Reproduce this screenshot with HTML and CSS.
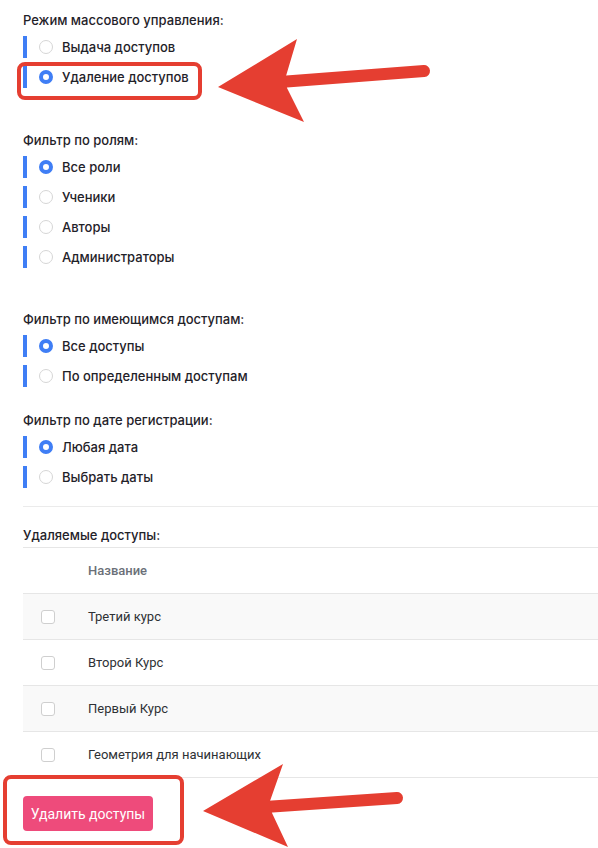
FILE: index.html
```html
<!DOCTYPE html>
<html lang="ru">
<head>
  <meta charset="UTF-8">
  <title>Массовое управление доступами</title>
  <link rel="stylesheet" href="styles.css">
</head>
<body>
  <div class="page">
    <!-- Режим -->
    <div class="group spaced">
      <div class="group-title">Режим массового управления:</div>
      <label class="option"><input type="radio" name="mode"> Выдача доступов</label>
      <label class="option"><input type="radio" name="mode" checked> Удаление доступов</label>
    </div>

    <!-- Роли -->
    <div class="group spaced roles">
      <div class="group-title">Фильтр по ролям:</div>
      <label class="option"><input type="radio" name="role" checked> Все роли</label>
      <label class="option"><input type="radio" name="role"> Ученики</label>
      <label class="option"><input type="radio" name="role"> Авторы</label>
      <label class="option"><input type="radio" name="role"> Администраторы</label>
    </div>

    <!-- Доступы -->
    <div class="group">
      <div class="group-title">Фильтр по имеющимся доступам:</div>
      <label class="option"><input type="radio" name="access" checked> Все доступы</label>
      <label class="option"><input type="radio" name="access"> По определенным доступам</label>
    </div>

    <!-- Дата -->
    <div class="group last">
      <div class="group-title">Фильтр по дате регистрации:</div>
      <label class="option"><input type="radio" name="date" checked> Любая дата</label>
      <label class="option"><input type="radio" name="date"> Выбрать даты</label>
    </div>

    <hr class="divider">

    <div class="group-title">Удаляемые доступы:</div>
    <table class="access-table">
      <thead>
        <tr>
          <th class="col-check"></th>
          <th>Название</th>
        </tr>
      </thead>
      <tbody>
        <tr><td class="col-check"><input type="checkbox"></td><td>Третий курс</td></tr>
        <tr><td class="col-check"><input type="checkbox"></td><td>Второй Курс</td></tr>
        <tr><td class="col-check"><input type="checkbox"></td><td>Первый Курс</td></tr>
        <tr><td class="col-check"><input type="checkbox"></td><td>Геометрия для начинающих</td></tr>
      </tbody>
    </table>

    <button class="btn-delete">Удалить доступы</button>
  </div>

  <!-- Annotation overlay -->
  <svg class="annotations" width="598" height="848" viewBox="0 0 598 848">
    <rect x="19" y="64" width="181" height="34" rx="6" fill="none" stroke="#e53e31" stroke-width="4"/>
    <line x1="280" y1="82" x2="424" y2="71" stroke="#e53e31" stroke-width="12" stroke-linecap="round"/>
    <polygon points="218,87 297,39 286,76 287,88 304,122" fill="#e53e31"/>

    <rect x="5" y="777" width="177" height="66" rx="6" fill="none" stroke="#e53e31" stroke-width="4"/>
    <line x1="265" y1="807" x2="397" y2="798" stroke="#e53e31" stroke-width="12" stroke-linecap="round"/>
    <polygon points="203,811 283,764 270,801 272,813 288,847" fill="#e53e31"/>
  </svg>
</body>
</html>
```

FILE: styles.css
```css
body {
  margin: 0;
  background: #fff;
  color: #1f2229;
  font-family: Inter, "Noto Sans", sans-serif;
  position: relative;
}
.page {
  padding: 12px 0 20px 23px;
}
/* Radio groups */
.group {
  display: flex;
  flex-direction: column;
  gap: 8px;
  margin-bottom: 25px;
}
.group.spaced {
  margin-bottom: 44px;
}
.group.roles {
  margin-bottom: 43px;
}
.group.last {
  margin-bottom: 18px;
}
.group-title {
  font-size: 13px;
  font-weight: 500;
  line-height: 16px;
  color: #1f2229;
}
.option {
  display: flex;
  align-items: center;
  height: 22px;
  border-left: 4px solid #3f7ef5;
  padding-left: 12px;
  font-size: 13px;
  font-weight: 500;
  color: #1f2229;
  cursor: pointer;
}
.option input[type="radio"] {
  appearance: none;
  -webkit-appearance: none;
  box-sizing: border-box;
  width: 14px;
  height: 14px;
  margin: 0 9px 0 0;
  border: 1px solid #d6d6d6;
  border-radius: 50%;
  background: #fff;
}
.option input[type="radio"]:checked {
  border: 4px solid #3f7ef5;
}
/* Divider */
.divider {
  border: none;
  border-top: 1px solid #ebebeb;
  margin: 0 0 20px 0;
}
/* Table */
.access-table {
  width: 100%;
  border-collapse: collapse;
  margin-top: 4px;
  font-family: Roboto, "Liberation Sans", sans-serif;
  font-size: 13px;
}
.access-table th,
.access-table td {
  height: 45px;
  padding: 0 0 0 12px;
  border-top: 1px solid #e6e6e6;
  text-align: left;
  vertical-align: middle;
}
.access-table th {
  height: 44px;
  font-weight: 500;
  color: #6b7078;
  padding-bottom: 1px;
}
.access-table td {
  color: #2e3135;
}
.access-table tbody tr:last-child td {
  border-bottom: 1px solid #e6e6e6;
}
.access-table tbody tr:nth-child(odd) {
  background: #f9f9f9;
}
.access-table .col-check {
  width: 35px;
  padding-left: 18px;
}
.access-table input[type="checkbox"] {
  appearance: none;
  -webkit-appearance: none;
  box-sizing: border-box;
  display: block;
  width: 14px;
  height: 14px;
  margin: 0;
  border: 1px solid #cfcfcf;
  border-radius: 3px;
  background: #fff;
}
/* Button */
.btn-delete {
  display: block;
  margin-top: 18px;
  width: 130px;
  height: 35px;
  padding: 0;
  border: none;
  border-radius: 4px;
  background: #ee4b7b;
  color: #fff;
  font-family: Roboto, "Liberation Sans", sans-serif;
  font-size: 14px;
  cursor: pointer;
}
/* Annotation overlay */
.annotations {
  position: absolute;
  top: 0;
  left: 0;
  pointer-events: none;
}
```
